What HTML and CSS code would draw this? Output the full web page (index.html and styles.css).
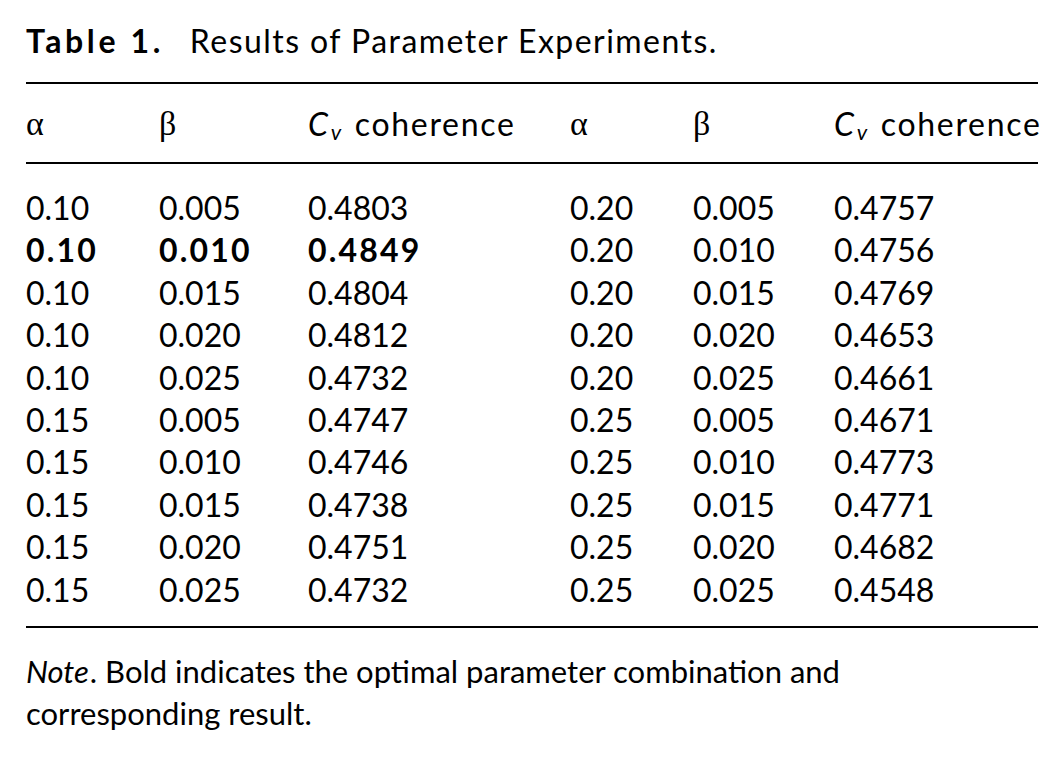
FILE: index.html
```html
<!DOCTYPE html>
<html lang="en">
<head>
<meta charset="utf-8">
<title>Table 1. Results of Parameter Experiments.</title>
<link rel="stylesheet" href="styles.css">
</head>
<body>
<div class="page">
  <p class="caption"><b class="label">Table 1.</b><span class="caption-text">Results of Parameter Experiments.</span></p>
  <table class="results">
    <colgroup>
      <col class="c1"><col class="c2"><col class="c3"><col class="c4"><col class="c5"><col class="c6">
    </colgroup>
    <thead>
      <tr>
        <th><span class="greek">α</span></th>
        <th><span class="greek">β</span></th>
        <th><i>C</i><sub><i>v</i></sub> coherence</th>
        <th><span class="greek">α</span></th>
        <th><span class="greek">β</span></th>
        <th><i>C</i><sub><i>v</i></sub> coherence</th>
      </tr>
    </thead>
    <tbody>
      <tr class="first"><td>0.10</td><td>0.005</td><td>0.4803</td><td>0.20</td><td>0.005</td><td>0.4757</td></tr>
      <tr><td class="best">0.10</td><td class="best">0.010</td><td class="best">0.4849</td><td>0.20</td><td>0.010</td><td>0.4756</td></tr>
      <tr><td>0.10</td><td>0.015</td><td>0.4804</td><td>0.20</td><td>0.015</td><td>0.4769</td></tr>
      <tr><td>0.10</td><td>0.020</td><td>0.4812</td><td>0.20</td><td>0.020</td><td>0.4653</td></tr>
      <tr><td>0.10</td><td>0.025</td><td>0.4732</td><td>0.20</td><td>0.025</td><td>0.4661</td></tr>
      <tr><td>0.15</td><td>0.005</td><td>0.4747</td><td>0.25</td><td>0.005</td><td>0.4671</td></tr>
      <tr><td>0.15</td><td>0.010</td><td>0.4746</td><td>0.25</td><td>0.010</td><td>0.4773</td></tr>
      <tr><td>0.15</td><td>0.015</td><td>0.4738</td><td>0.25</td><td>0.015</td><td>0.4771</td></tr>
      <tr><td>0.15</td><td>0.020</td><td>0.4751</td><td>0.25</td><td>0.020</td><td>0.4682</td></tr>
      <tr class="last"><td>0.15</td><td>0.025</td><td>0.4732</td><td>0.25</td><td>0.025</td><td>0.4548</td></tr>
    </tbody>
  </table>
  <p class="note"><i class="note-label">Note</i>. Bold indicates the optimal parameter combination and corresponding result.</p>
</div>
</body>
</html>
```

FILE: styles.css
```css
html, body {
  margin: 0;
  padding: 0;
  background: #ffffff;
}

.page {
  padding: 20px 26px 0 26px;
  font-family: "Lato", "Open Sans", sans-serif;
  font-size: 32px;
  color: #000;
}

.caption {
  margin: 0;
  line-height: 42px;
  white-space: nowrap;
}

.caption .label {
  font-weight: 700;
  letter-spacing: 3.6px;
  margin-right: 26px;
}

.caption-text {
  letter-spacing: 1.45px;
}

.results {
  width: 1012px;
  margin-top: 20px;
  border-collapse: collapse;
  table-layout: fixed;
  border-top: 2px solid #000;
  border-bottom: 2px solid #000;
}

.c1 { width: 133px; }
.c2 { width: 149px; }
.c3 { width: 262px; }
.c4 { width: 123px; }
.c5 { width: 141px; }
.c6 { width: 204px; }

.results th {
  text-align: left;
  font-weight: 400;
  line-height: 42px;
  padding: 18px 0 17px 0;
  border-bottom: 2px solid #000;
  white-space: nowrap;
  letter-spacing: 1.7px;
}

.results th sub {
  font-size: 0.68em;
  vertical-align: -0.22em;
  line-height: 0;
  margin-left: 1px;
  margin-right: 2px;
}

.greek {
  font-family: "Liberation Serif", "DejaVu Serif", serif;
  font-size: 34px;
  letter-spacing: 0;
}

.results td {
  padding: 0;
  line-height: 42.4px;
  height: 42.4px;
  white-space: nowrap;
}

.results tr.first td {
  padding-top: 23px;
}

.results tr.last td {
  padding-bottom: 15px;
}

.results td.best {
  font-weight: 700;
  letter-spacing: 2.2px;
}

.note {
  margin: 22px 0 0 0;
  width: 880px;
  font-size: 31px;
  line-height: 42px;
}

.note-label {
  padding-right: 1px;
}
```
